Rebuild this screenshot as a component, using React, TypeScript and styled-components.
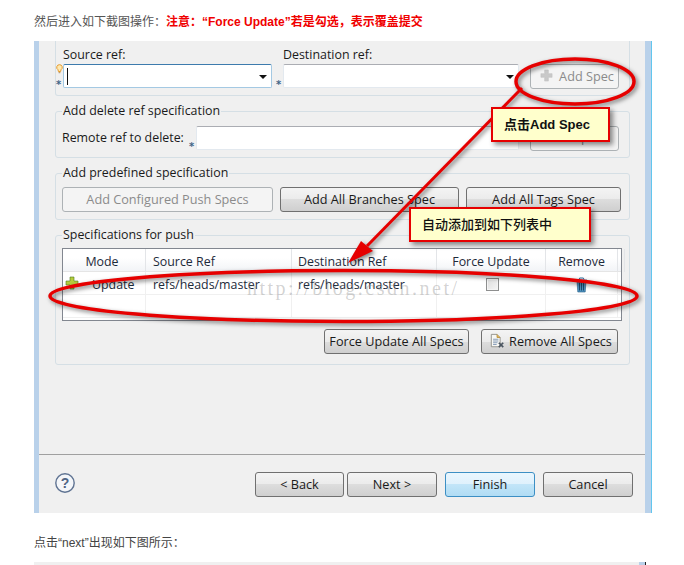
import React from "react";
import styled, { createGlobalStyle, css } from "styled-components";

const Global = createGlobalStyle`
  html, body { margin: 0; padding: 0; background: #fff; }
  body { width: 684px; height: 565px; overflow: hidden; }
`;

const Page = styled.div`
  position: relative;
  width: 684px;
  height: 565px;
  overflow: hidden;
  font-family: "Open Sans", "Noto Sans CJK SC", sans-serif;
`;

const Intro = styled.div`
  height: 41px;
  box-sizing: border-box;
  padding: 14px 0 0 34px;
  font: 12px/16px "Liberation Sans", "Noto Sans CJK SC", sans-serif;
  color: #555;
`;

const Warn = styled.strong`
  color: #f00000;
  font-weight: 700;
`;

const Outro = styled.div`
  height: 49px;
  box-sizing: border-box;
  padding: 22px 0 0 34px;
  font: 12px/16px "Liberation Sans", "Noto Sans CJK SC", sans-serif;
  color: #444;
`;

const Stub = styled.div`
  width: 612px;
  height: 3px;
  margin-left: 34px;
  background: linear-gradient(to right, #f0f0f0 605px, #b9d1ea 605px);
  border-right: 1px solid #222;
  box-sizing: border-box;
`;

const Window = styled.div`
  width: 617px;
  height: 472px;
  margin-left: 34px;
  box-sizing: border-box;
  display: flex;
  flex-direction: column;
  background: #f0f0f0;
  border-left: 5px solid #b9d1ea;
  border-right: 6px solid #b9d1ea;
  box-shadow: 1px 0 0 #62c6ee;
  color: #1a1a1a;
  font-size: 12px;
`;

const Body = styled.div`
  height: 413px;
  box-sizing: border-box;
  padding: 0 15px 0 16px;
  display: flex;
  flex-direction: column;
  gap: 7px;
`;

const TopGroup = styled.div`
  height: 55px;
  box-sizing: border-box;
  padding: 1px 9px 0 7px;
  border: 1px solid #d5dfe5;
  border-top: 0;
  border-radius: 0 0 3px 3px;
  display: grid;
  grid-template-columns: 209px 236px 89px;
  column-gap: 11px;
  grid-template-rows: 22px 24px;
`;

const Group = styled.fieldset<{ $h: number; $pt: number }>`
  margin: 0;
  min-width: 0;
  height: ${(p) => p.$h}px;
  box-sizing: border-box;
  padding: ${(p) => p.$pt}px 8px 0 6px;
  border: 1px solid #d5dfe5;
  border-radius: 3px;
`;

const Legend = styled.legend`
  padding: 0 1px;
  font-size: 12.4px;
  line-height: 16px;
  color: #1a1a1a;
`;

const FieldLabel = styled.label`
  font-size: 12.4px;
  line-height: 26px;
  color: #1a1a1a;
`;

const Combo = styled.div<{ $focus?: boolean }>`
  position: relative;
  box-sizing: border-box;
  height: 24px;
  background: #fff;
  border: 1px solid;
  border-radius: 2px;
  border-color: ${(p) => (p.$focus ? "#3d7bad #a4c9e3 #a4c9e3 #a4c9e3" : "#abadb3 #e3e9ef #e3e9ef #e3e9ef")};
`;

const Arrow = styled.span`
  position: absolute;
  right: 4px;
  top: 10px;
  width: 0;
  height: 0;
  border: 4px solid transparent;
  border-top: 4px solid #111;
  border-bottom: 0;
`;

const Caret = styled.span`
  position: absolute;
  left: 3px;
  top: 3px;
  width: 1px;
  height: 17px;
  background: #111;
`;

const Deco = styled.span`
  position: absolute;
  left: -8px;
  bottom: -3px;
  font: 700 10px/10px "DejaVu Sans", sans-serif;
  color: #3f6587;
`;

const BulbIcon = styled.svg`
  position: absolute;
  left: -8px;
  top: -1px;
`;

const InlineRow = styled.div`
  display: flex;
  align-items: center;
`;

const RemoteLabel = styled(FieldLabel)`
  width: 134px;
  flex: none;
`;

const RemoteInput = styled(Combo)`
  width: 323px;
  margin-right: 11px;
`;

const Btn = styled.button<{ $w: number; $pl?: number; $disabled?: boolean; $primary?: boolean }>`
  width: ${(p) => p.$w}px;
  height: 25px;
  flex: none;
  box-sizing: border-box;
  padding: 0 0 2px ${(p) => p.$pl ?? 0}px;
  display: inline-flex;
  align-items: center;
  justify-content: center;
  gap: 6px;
  font-family: "Open Sans", sans-serif;
  font-size: 12.7px;
  color: #1a1a1a;
  border: 1px solid #707070;
  border-radius: 3px;
  background: linear-gradient(#f4f4f4 0%, #ebebeb 50%, #dddddd 50%, #cfcfcf 100%);
  ${(p) =>
    p.$disabled &&
    css`
      background: #f4f4f4;
      border-color: #adb2b5;
      color: #8b8b8b;
    `}
  ${(p) =>
    p.$primary &&
    css`
      border: 1.5px solid #3c8fc4;
      background: linear-gradient(#e9f6fe 0%, #dff1fc 50%, #c2e5f8 50%, #b0dcf4 100%);
    `}
`;

const ButtonRow = styled.div`
  display: flex;
  gap: 7px;
`;

const TableBox = styled.div`
  width: 560px;
  height: 73px;
  box-sizing: border-box;
  background: #fff;
  border: 1px solid #828790;
`;

const columns = "83px 146px 145px 109px 72px 3px";

const HeaderRow = styled.div`
  display: grid;
  grid-template-columns: ${columns};
  height: 23px;
  background: linear-gradient(#ffffff 0%, #ffffff 40%, #f2f4f7 100%);
  border-bottom: 1px solid #e5e5e5;
  box-sizing: border-box;
`;

const HeaderCell = styled.div<{ $center?: boolean; $pad?: number; $padRight?: number }>`
  box-sizing: border-box;
  border-right: 1px solid #e3e5e8;
  font-size: 12.4px;
  line-height: 25px;
  padding-left: ${(p) => p.$pad ?? 6}px;
  padding-right: ${(p) => p.$padRight ?? 0}px;
  text-align: ${(p) => (p.$center ? "center" : "left")};
  color: #1d2a3a;
`;

const DataRow = styled.div`
  display: grid;
  grid-template-columns: ${columns};
  height: 23px;
  box-sizing: border-box;
  border-bottom: 1px solid #f0f0f0;
`;

const Cell = styled.div<{ $pad?: number; $center?: boolean }>`
  box-sizing: border-box;
  border-right: 1px solid #f0f0f0;
  font-size: 12.4px;
  line-height: 23px;
  padding-left: ${(p) => p.$pad ?? 6}px;
  padding-top: 1px;
  display: flex;
  align-items: center;
  justify-content: ${(p) => (p.$center ? "center" : "flex-start")};
  position: relative;
  color: #1d2a3a;
`;

const AddIcon = styled.span`
  position: absolute;
  left: 2px;
  top: 4px;
  line-height: 0;
`;

const Check = styled.span`
  width: 13px;
  height: 13px;
  box-sizing: border-box;
  border: 1px solid #8e8f8f;
  background: linear-gradient(135deg, #dcdcdc, #f6f6f6);
  box-shadow: inset 0 0 0 1px #f4f4f4;
`;

const SpecActions = styled.div`
  width: 556px;
  margin-top: 8px;
  display: flex;
  justify-content: flex-end;
  gap: 12px;
`;

const Divider = styled.div`
  height: 1px;
  background: #a0a0a0;
`;

const Footer = styled.div`
  height: 58px;
  box-sizing: border-box;
  padding: 17px 12px 0 16px;
  display: flex;
  align-items: flex-start;
`;

const HelpIcon = styled.svg`
  margin-top: 1px;
`;

const DocIcon = styled.svg`
  margin-right: -2px;
`;

const FooterButtons = styled.div`
  margin-left: auto;
  display: flex;
  gap: 8px;
`;

const BackNext = styled.div`
  display: flex;
  gap: 3px;
`;

const Annotation = styled.svg`
  position: absolute;
  left: 0;
  top: 0;
  pointer-events: none;
  overflow: visible;
`;

const Shadowed = styled.g`
  filter: drop-shadow(2px 2px 2px rgba(0, 0, 0, 0.5));
`;

const Callout = styled.div<{ $x: number; $y: number; $w: number; $h: number; $bold?: boolean }>`
  position: absolute;
  left: ${(p) => p.$x}px;
  top: ${(p) => p.$y}px;
  width: ${(p) => p.$w}px;
  height: ${(p) => p.$h}px;
  box-sizing: border-box;
  background: #ffffcc;
  border: 2px solid #e60000;
  box-shadow: 3px 3px 5px rgba(0, 0, 0, 0.45);
  padding: 0 0 3px 11px;
  display: flex;
  align-items: center;
  font-family: "Liberation Sans", "Noto Sans CJK SC", sans-serif;
  font-size: 13px;
  font-weight: ${(p) => (p.$bold ? 700 : 500)};
  color: #111;
`;

const Watermark = styled.div`
  position: absolute;
  left: 247px;
  top: 277px;
  font: 20px/22px "Liberation Serif", serif;
  letter-spacing: 2.5px;
  color: rgba(120, 120, 120, 0.32);
  white-space: nowrap;
  pointer-events: none;
`;

const PlusGlyph = ({ size, fill, dark }: { size: number; fill: string; dark: string }) => (
  <svg width={size} height={size} viewBox="0 0 14 14">
    <path d="M5 1h4v4h4v4H9v4H5V9H1V5h4z" fill={fill} stroke={dark} strokeWidth="0.6" />
  </svg>
);

const Bulb = () => (
  <BulbIcon width="7" height="10" viewBox="0 0 7 10">
    <path d="M3.5.7a2.7 2.7 0 0 1 1.5 5L4.6 7.5H2.4L2 5.7a2.7 2.7 0 0 1 1.5-5z" fill="#ffe9b0" stroke="#e49a2e" strokeWidth="1" />
    <path d="M2.6 8.7h1.8" stroke="#b08a50" strokeWidth="1" />
  </BulbIcon>
);

const Trash = () => (
  <svg width="13" height="16" viewBox="0 0 13 16">
    <path d="M1 2.6h11V4.2H1z" fill="#2f6f9f" />
    <path d="M4 2.6 4.6 1h3.8L9 2.6" fill="none" stroke="#2f6f9f" />
    <path d="M2 4.2h9l-.8 10.8H2.8z" fill="#4f93c0" stroke="#245a83" strokeWidth=".6" />
    <path d="M4.5 5.5v8M6.5 5.5v8M8.5 5.5v8" stroke="#153f60" strokeWidth=".9" />
  </svg>
);

const DocX = () => (
  <DocIcon width="15" height="16" viewBox="0 0 17 17">
    <path d="M1.5 1H8l3.5 3.5V15h-10z" fill="#f7f7f4" stroke="#8d8d86" />
    <path d="M8 1v3.5h3.5" fill="#e3b95c" stroke="#b98f3a" />
    <path d="M3.5 6.5h6M3.5 8.5h6M3.5 10.5h5M3.5 12.5h4" stroke="#7c94b2" />
    <path d="M10 10.5l5 5M15 10.5l-5 5" stroke="#4a5560" strokeWidth="1.9" />
  </DocIcon>
);

const Help = () => (
  <HelpIcon width="20" height="20" viewBox="0 0 20 20">
    <circle cx="10" cy="10" r="9.2" fill="#f4f6f9" stroke="#5f7392" strokeWidth="1.4" />
    <text x="10" y="14.8" textAnchor="middle" fontFamily="Liberation Sans" fontWeight="700" fontSize="14" fill="#4f6484">?</text>
  </HelpIcon>
);

export default function App() {
  return (
    <Page>
      <Global />
      <Intro>
        {"然后进入如下截图操作\uFF1A"}
        <Warn>{"注意\uFF1A\u201CForce Update\u201D若是勾选\uFF0C表示覆盖提交"}</Warn>
      </Intro>
      <Window>
        <Body>
          <TopGroup>
            <FieldLabel>Source ref:</FieldLabel>
            <FieldLabel>Destination ref:</FieldLabel>
            <span />
            <Combo $focus>
              <Bulb />
              <Caret />
              <Arrow />
              <Deco>*</Deco>
            </Combo>
            <Combo>
              <Arrow />
              <Deco>*</Deco>
            </Combo>
            <Btn $w={89} $pl={5} $disabled>
              <PlusGlyph size={13} fill="#c9c9c9" dark="#c0c0c0" />
              Add Spec
            </Btn>
          </TopGroup>
          <Group $h={55} $pt={6}>
            <Legend>Add delete ref specification</Legend>
            <InlineRow>
              <RemoteLabel>Remote ref to delete:</RemoteLabel>
              <RemoteInput>
                <Deco>*</Deco>
              </RemoteInput>
              <Btn $w={89} $disabled>
                Add Spec
              </Btn>
            </InlineRow>
          </Group>
          <Group $h={55} $pt={6}>
            <Legend>Add predefined specification</Legend>
            <ButtonRow>
              <Btn $w={211} $disabled>
                Add Configured Push Specs
              </Btn>
              <Btn $w={179}>Add All Branches Spec</Btn>
              <Btn $w={155}>Add All Tags Spec</Btn>
            </ButtonRow>
          </Group>
          <Group $h={138} $pt={5}>
            <Legend>Specifications for push</Legend>
            <TableBox>
              <HeaderRow>
                <HeaderCell $center $pad={0} $padRight={4}>Mode</HeaderCell>
                <HeaderCell $pad={7}>Source Ref</HeaderCell>
                <HeaderCell>Destination Ref</HeaderCell>
                <HeaderCell $center $pad={0}>Force Update</HeaderCell>
                <HeaderCell $center $pad={0}>Remove</HeaderCell>
                <HeaderCell />
              </HeaderRow>
              <DataRow>
                <Cell $pad={29}>
                  <AddIcon>
                    <PlusGlyph size={14} fill="#b5cc3c" dark="#4d7a1f" />
                  </AddIcon>
                  Update
                </Cell>
                <Cell $pad={7}>refs/heads/master</Cell>
                <Cell>refs/heads/master</Cell>
                <Cell $center $pad={2}>
                  <Check />
                </Cell>
                <Cell $center $pad={0}>
                  <Trash />
                </Cell>
                <Cell />
              </DataRow>
              <DataRow>
                <Cell />
                <Cell />
                <Cell />
                <Cell />
                <Cell />
                <Cell />
              </DataRow>
            </TableBox>
            <SpecActions>
              <Btn $w={145}>Force Update All Specs</Btn>
              <Btn $w={137} $pl={3}>
                <DocX />
                Remove All Specs
              </Btn>
            </SpecActions>
          </Group>
        </Body>
        <Divider />
        <Footer>
          <Help />
          <FooterButtons>
            <BackNext>
              <Btn $w={89}>&lt; Back</Btn>
              <Btn $w={90}>Next &gt;</Btn>
            </BackNext>
            <Btn $w={90} $primary>
              Finish
            </Btn>
            <Btn $w={90}>Cancel</Btn>
          </FooterButtons>
        </Footer>
      </Window>
      <Outro>{"点击\u201Cnext\u201D出现如下图所示\uFF1A"}</Outro>
      <Stub />
      <Watermark>http://blog.csdn.net/</Watermark>
      <Annotation width="684" height="565" viewBox="0 0 684 565">
        <Shadowed>
          <ellipse cx="575" cy="81.5" rx="59" ry="22.5" fill="none" stroke="#e60000" strokeWidth="3.5" />
          <ellipse cx="343.5" cy="296" rx="293.5" ry="25.5" fill="none" stroke="#e60000" strokeWidth="3.5" />
          <path d="M522 88 367 246" stroke="#e60000" strokeWidth="3" fill="none" />
          <path d="M348 263 361 241 373 251z" fill="#e60000" />
        </Shadowed>
      </Annotation>
      <Callout $x={491} $y={107} $w={119} $h={35} $bold>
        点击Add Spec
      </Callout>
      <Callout $x={409} $y={207} $w={182} $h={35}>
        自动添加到如下列表中
      </Callout>
    </Page>
  );
}
